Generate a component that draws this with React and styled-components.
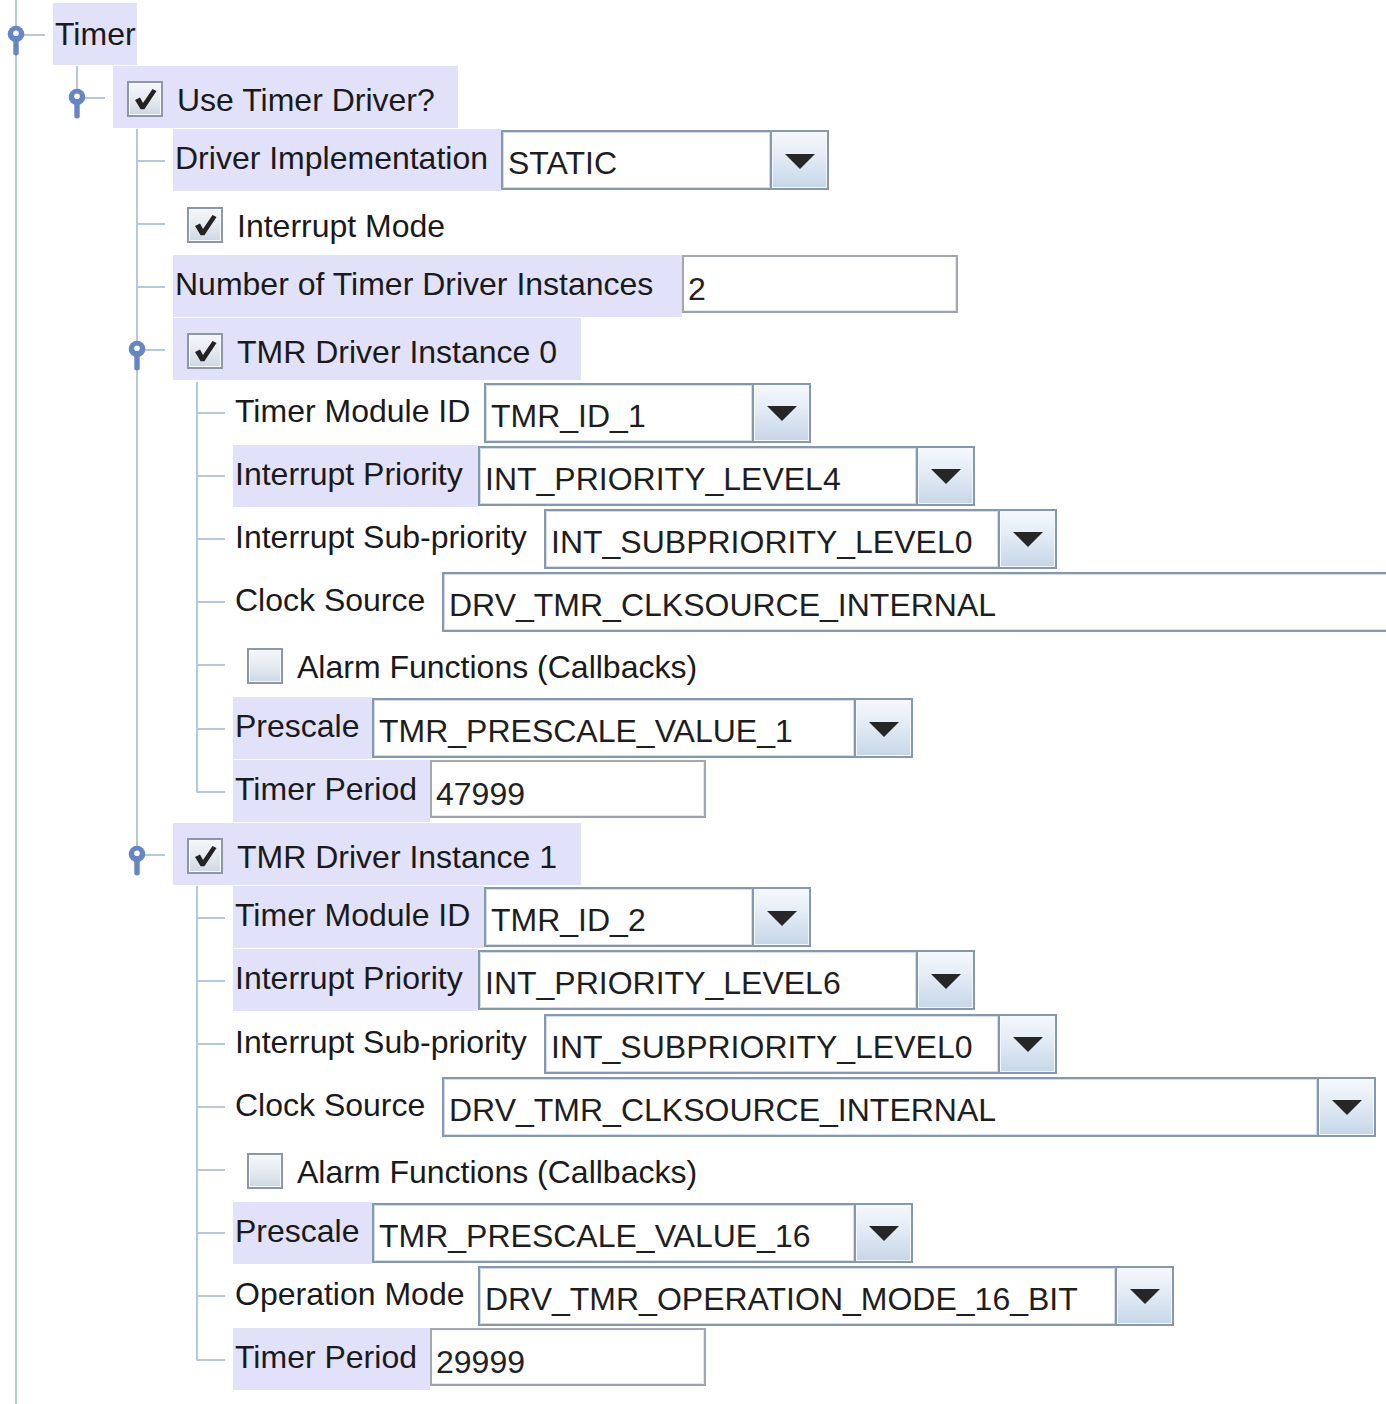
import React from "react";
import styled, { createGlobalStyle } from "styled-components";

const LINE = "#b7c7de";
const HL = "#e1e1fa";
const FONT = `"Liberation Sans", Arial, sans-serif`;

const Global = createGlobalStyle`
  html, body { margin: 0; padding: 0; background: #fff; overflow: hidden; }
  body { font-family: ${FONT}; }
`;

const Tree = styled.div`
  box-sizing: border-box;
  min-height: 100vh;
  padding-top: 3px;
  font-family: ${FONT};
  font-size: 32px;
  color: #1a1a1a;
  background-image: linear-gradient(${LINE}, ${LINE});
  background-repeat: no-repeat;
  background-size: 2px 100%;
  background-position: 15px 0;
`;

const Row = styled.div`
  display: flex;
  height: 63.1px;
  width: max-content;
`;

const guideBg = ({ $v, $h, $first }) => {
  const w = $first ? 53 : 60;
  const off = $first ? 16 : 24;
  const layers = [];
  const sizes = [];
  const pos = [];
  if ($v !== "none") {
    layers.push(`linear-gradient(${LINE}, ${LINE})`);
    sizes.push(`2px ${$v === "full" ? "100%" : "calc(50% + 1px)"}`);
    pos.push(`${off - 1}px 0`);
  }
  if ($h) {
    layers.push(`linear-gradient(${LINE}, ${LINE})`);
    sizes.push(`${w - 8 - off}px 2px`);
    pos.push(`${off}px 50%`);
  }
  if (!layers.length) return "";
  return `
    background-image: ${layers.join(", ")};
    background-size: ${sizes.join(", ")};
    background-position: ${pos.join(", ")};
    background-repeat: no-repeat;
  `;
};

const Guide = styled.div`
  flex: none;
  box-sizing: border-box;
  width: ${(p) => (p.$first ? 53 : 60)}px;
  height: 100%;
  display: flex;
  align-items: center;
  padding-left: ${(p) => (p.$first ? 6 : 14)}px;
  ${guideBg}
`;

const Content = styled.div`
  display: flex;
  align-items: flex-start;
  height: 100%;
`;

const Label = styled.div`
  flex: none;
  box-sizing: border-box;
  height: 62px;
  width: ${(p) => p.$w}px;
  padding-left: 2px;
  line-height: 59px;
  white-space: nowrap;
  background: ${(p) => (p.$hl ? HL : "transparent")};
`;

const NodeText = styled.div`
  height: 62px;
  line-height: 63px;
  padding: 0 1px 0 2px;
  white-space: nowrap;
  background: ${(p) => (p.$hl ? HL : "transparent")};
`;

const CheckRow = styled.div`
  box-sizing: border-box;
  height: 62px;
  display: flex;
  align-items: center;
  gap: 14px;
  padding-left: 14px;
  width: ${(p) => (p.$w ? `${p.$w}px` : "auto")};
  background: ${(p) => (p.$hl ? HL : "transparent")};
`;

const Box = styled.span`
  flex: none;
  box-sizing: border-box;
  width: 36px;
  height: 36px;
  margin-top: 3px;
  border: 2px solid #8e97a5;
  box-shadow: inset 0 0 0 1px #f7f9fc;
  background: linear-gradient(180deg, #f5f7fa 0%, #e3e9f0 55%, #cdd7e3 100%);
  display: flex;
  align-items: center;
  justify-content: center;
`;

const CheckText = styled.span`
  line-height: 32px;
  padding-top: 5px;
  white-space: nowrap;
`;

const Combo = styled.div`
  flex: none;
  box-sizing: border-box;
  display: flex;
  width: ${(p) => p.$w}px;
  height: 60px;
  margin-top: 1px;
  border: 2px solid #8797ae;
  background: #fff;
`;

const ComboValue = styled.div`
  flex: 1;
  box-sizing: border-box;
  padding: 6px 0 0 5px;
  line-height: 50px;
  white-space: nowrap;
  overflow: hidden;
  color: #1e1e1e;
  box-shadow: inset 0 0 0 1px #d3dde9;
`;

const ComboButton = styled.div`
  flex: none;
  width: 55px;
  border-left: 2px solid #8797ae;
  background: linear-gradient(180deg, #f5f8fc 0%, #e2ebf5 45%, #c6d6e8 100%);
  box-shadow: inset 0 0 0 1px #f4f8fc;
  display: flex;
  align-items: center;
  justify-content: center;
`;

const Arrow = styled.span`
  width: 0;
  height: 0;
  margin-top: 2px;
  border-left: 15px solid transparent;
  border-right: 15px solid transparent;
  border-top: 15px solid #262626;
`;

const Field = styled.div`
  flex: none;
  box-sizing: border-box;
  width: ${(p) => p.$w}px;
  height: 58px;
  border: 2px solid #a3a7ae;
  border-bottom-color: #9ea3aa;
  box-shadow: inset -1px -1px 0 #e6e8ec;
  background: #fff;
  padding: 10px 0 0 4px;
  line-height: 44px;
  color: #222;
  white-space: nowrap;
`;

const Key = () => (
  <svg width="20" height="46" viewBox="0 0 20 46">
    <path d="M7.3 22 H12.7 V41.6 Q12.7 43.6 10 43.6 Q7.3 43.6 7.3 41.6 Z" fill="#6686c2" />
    <circle cx="10" cy="22" r="8.3" fill="#6686c2" />
    <circle cx="10" cy="21.2" r="2.8" fill="#fff" />
  </svg>
);

const CheckMark = () => (
  <svg width="26" height="26" viewBox="0 0 26 26">
    <path
      d="M3 14 L8 11.6 L11 17 L20.5 3 L24.5 5 L12.4 23.2 L8.6 23.2 Z"
      fill="#232323"
    />
  </svg>
);

const Checkbox = ({ checked }) => <Box>{checked ? <CheckMark /> : null}</Box>;

const cellMap = {
  n: { v: "none", h: false },
  p: { v: "full", h: false },
  t: { v: "full", h: true },
  l: { v: "half", h: true },
  h: { v: "none", h: true },
};

const A0 = ["n", "n", "p"];
const A1 = ["n", "n", "n"];

const rows = [
  { g: ["hk"], kind: "text", text: "Timer", hl: true },
  { g: ["n", "lk"], kind: "check", text: "Use Timer Driver?", checked: true, hl: true, w: 345 },
  { g: ["n", "n", "t"], kind: "combo", label: "Driver Implementation", lw: 328, value: "STATIC", cw: 328, hl: true },
  { g: ["n", "n", "t"], kind: "check", text: "Interrupt Mode", checked: true },
  { g: ["n", "n", "t"], kind: "field", label: "Number of Timer Driver Instances", lw: 509, value: "2", cw: 276, hl: true },
  { g: ["n", "n", "tk"], kind: "check", text: "TMR Driver Instance 0", checked: true, hl: true, w: 408 },
  { g: [...A0, "t"], kind: "combo", label: "Timer Module ID", lw: 251, value: "TMR_ID_1", cw: 327 },
  { g: [...A0, "t"], kind: "combo", label: "Interrupt Priority", lw: 245, value: "INT_PRIORITY_LEVEL4", cw: 497, hl: true },
  { g: [...A0, "t"], kind: "combo", label: "Interrupt Sub-priority", lw: 311, value: "INT_SUBPRIORITY_LEVEL0", cw: 513 },
  { g: [...A0, "t"], kind: "combo", label: "Clock Source", lw: 209, value: "DRV_TMR_CLKSOURCE_INTERNAL", cw: 1010 },
  { g: [...A0, "t"], kind: "check", text: "Alarm Functions (Callbacks)", checked: false },
  { g: [...A0, "t"], kind: "combo", label: "Prescale", lw: 139, value: "TMR_PRESCALE_VALUE_1", cw: 541, hl: true },
  { g: [...A0, "l"], kind: "field", label: "Timer Period", lw: 197, value: "47999", cw: 276, hl: true },
  { g: ["n", "n", "lk"], kind: "check", text: "TMR Driver Instance 1", checked: true, hl: true, w: 408 },
  { g: [...A1, "t"], kind: "combo", label: "Timer Module ID", lw: 251, value: "TMR_ID_2", cw: 327, hl: true },
  { g: [...A1, "t"], kind: "combo", label: "Interrupt Priority", lw: 245, value: "INT_PRIORITY_LEVEL6", cw: 497, hl: true },
  { g: [...A1, "t"], kind: "combo", label: "Interrupt Sub-priority", lw: 311, value: "INT_SUBPRIORITY_LEVEL0", cw: 513 },
  { g: [...A1, "t"], kind: "combo", label: "Clock Source", lw: 209, value: "DRV_TMR_CLKSOURCE_INTERNAL", cw: 934 },
  { g: [...A1, "t"], kind: "check", text: "Alarm Functions (Callbacks)", checked: false },
  { g: [...A1, "t"], kind: "combo", label: "Prescale", lw: 139, value: "TMR_PRESCALE_VALUE_16", cw: 541, hl: true },
  { g: [...A1, "t"], kind: "combo", label: "Operation Mode", lw: 245, value: "DRV_TMR_OPERATION_MODE_16_BIT", cw: 696 },
  { g: [...A1, "l"], kind: "field", label: "Timer Period", lw: 197, value: "29999", cw: 276, hl: true },
];

const NodeContent = ({ r }) => {
  if (r.kind === "text") return <NodeText $hl={r.hl}>{r.text}</NodeText>;
  if (r.kind === "check")
    return (
      <CheckRow $hl={r.hl} $w={r.w}>
        <Checkbox checked={r.checked} />
        <CheckText>{r.text}</CheckText>
      </CheckRow>
    );
  return (
    <>
      <Label $w={r.lw} $hl={r.hl}>
        {r.label}
      </Label>
      {r.kind === "combo" ? (
        <Combo $w={r.cw}>
          <ComboValue>{r.value}</ComboValue>
          <ComboButton>
            <Arrow />
          </ComboButton>
        </Combo>
      ) : (
        <Field $w={r.cw}>{r.value}</Field>
      )}
    </>
  );
};

export default function App() {
  return (
    <>
      <Global />
      <Tree>
        {rows.map((r, i) => (
          <Row key={i}>
            {r.g.map((c, j) => {
              const m = cellMap[c[0]];
              return (
                <Guide key={j} $first={j === 0} $v={m.v} $h={m.h}>
                  {c.includes("k") ? <Key /> : null}
                </Guide>
              );
            })}
            <Content>
              <NodeContent r={r} />
            </Content>
          </Row>
        ))}
      </Tree>
    </>
  );
}
